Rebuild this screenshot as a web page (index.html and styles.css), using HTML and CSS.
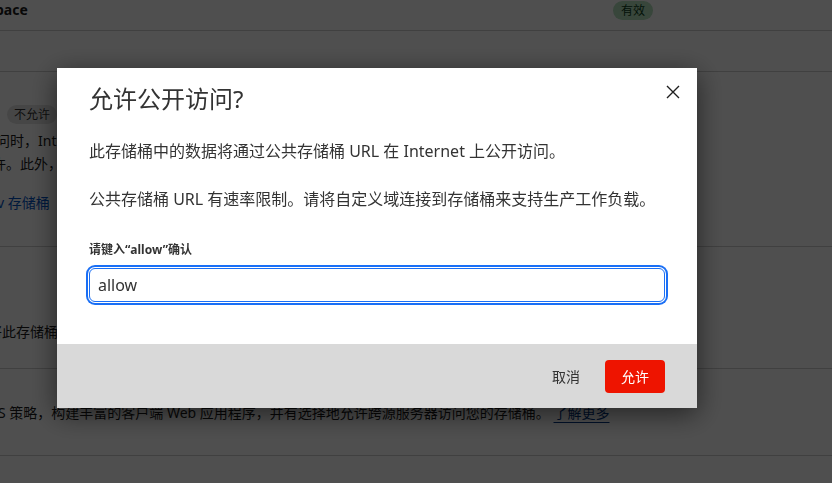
FILE: index.html
```html
<!DOCTYPE html>
<html lang="zh-CN">
<head>
    <meta charset="UTF-8">
    <meta name="viewport" content="width=device-width, initial-scale=1.0">
    <title>存储桶设置</title>
    <link rel="stylesheet" href="styles.css">
</head>
<body>

    <!-- Bucket settings page underneath the dialog -->
    <div class="page">
        <div class="row row-top">
            <span class="name">pace</span>
            <span class="badge badge-ok">有效</span>
        </div>
        <div class="row row-gap"></div>
        <div class="row section-access">
            <span class="badge badge-off">不允许</span>
            <p class="desc">问时，Internet 上的任何人都可以</p>
            <p class="desc">许。此外，您的存储桶</p>
            <a class="link">v 存储桶</a>
        </div>
        <div class="row section-domain">
            <p class="desc desc-cut">将此存储桶</p>
        </div>
        <div class="row section-cors">
            <p class="desc desc-cut2">S 策略，构建丰富的客户端 Web 应用程序，并有选择地允许跨源服务器访问您的存储桶。 <a class="link link-line">了解更多</a></p>
        </div>
    </div>

    <div class="overlay"></div>

    <div class="modal" role="dialog" aria-labelledby="modalTitle">
        <div class="modal-head">
            <h2 id="modalTitle">允许公开访问?</h2>
            <button class="close" aria-label="关闭">
                <svg width="14" height="14" viewBox="0 0 14 14">
                    <path d="M1 1 13 13M13 1 1 13" stroke="#1f1f1f" stroke-width="1.4" fill="none"/>
                </svg>
            </button>
        </div>
        <div class="modal-body">
            <div class="intro">
                <p>此存储桶中的数据将通过公共存储桶 URL 在 Internet 上公开访问。</p>
                <p>公共存储桶 URL 有速率限制。请将自定义域连接到存储桶来支持生产工作负载。</p>
            </div>
            <div class="field">
                <label for="confirmText">请键入“allow”确认</label>
                <input type="text" id="confirmText" value="allow" autofocus>
            </div>
        </div>
        <div class="modal-foot">
            <button class="btn btn-cancel">取消</button>
            <button class="btn btn-allow">允许</button>
        </div>
    </div>

</body>
</html>
```

FILE: styles.css
```css
* {
    box-sizing: border-box;
}

html, body {
    margin: 0;
    height: 100%;
}

body {
    font-family: "Noto Sans", "Noto Sans CJK SC", sans-serif;
    background-color: #fff;
    color: #1a1a1a;
    overflow: hidden;
}

/* page underneath */
.page {
    font-size: 14px;
}

.row {
    border-bottom: 1px solid #cecece;
}

.row-top {
    display: flex;
    align-items: flex-start;
    height: 31px;
    padding-top: 1px;
}

.name {
    width: 618px;
    margin-left: -5px;
    font-weight: 700;
    line-height: 17px;
}

.badge {
    display: inline-block;
    height: 19px;
    line-height: 19px;
    font-size: 12px;
    border-radius: 10px;
}

.badge-ok {
    padding: 0 8px;
    background-color: #b4e0bd;
    color: #0b3d1a;
}

.badge-off {
    margin-left: 7px;
    padding: 0 7px;
    background-color: #e3e3e3;
    color: #333;
}

.row-gap {
    height: 41px;
}

.section-access {
    height: 175px;
    padding-top: 32px;
}

.desc {
    margin: 0;
    line-height: 23px;
    white-space: nowrap;
}

.section-access .badge + .desc {
    margin-top: 5px;
    margin-left: -4px;
}

.section-access .desc + .desc {
    margin-left: -8px;
}

.link {
    display: block;
    margin-top: 16px;
    margin-left: -3px;
    line-height: 23px;
    color: #0051c3;
}

.section-domain {
    height: 122px;
    padding-top: 73px;
}

.desc-cut {
    margin-left: -12px;
}

.section-cors {
    height: 87px;
    padding-top: 32px;
}

.desc-cut2 {
    margin-left: -2px;
}

.link-line {
    display: inline;
    margin: 0;
    color: #003682;
    text-decoration: underline;
    text-underline-offset: 4px;
}

/* dialog */
.overlay {
    position: fixed;
    inset: 0;
    background-color: rgba(0, 0, 0, 0.69);
}

.modal {
    position: fixed;
    left: 57px;
    top: 68px;
    width: 640px;
    background-color: #fff;
    color: #333;
    box-shadow: 0 6px 26px rgba(0, 0, 0, 0.55);
}

.modal-head {
    position: relative;
    padding: 15px 32px 0;
}

.modal-head h2 {
    margin: 0;
    font-size: 24px;
    line-height: 32px;
    font-weight: 400;
    color: #333;
}

.close {
    position: absolute;
    top: 17px;
    right: 17px;
    width: 14px;
    height: 14px;
    padding: 0;
    border: none;
    background: none;
    cursor: pointer;
}

.close svg {
    display: block;
}

.modal-body {
    padding: 24px 32px 42px;
}

.intro p {
    margin: 0;
    font-size: 16px;
    line-height: 24px;
}

.intro p + p {
    margin-top: 24px;
}

.field {
    margin-top: 30px;
}

.field label {
    display: block;
    font-size: 12px;
    font-weight: 700;
    line-height: 18px;
}

.field input {
    display: block;
    width: 100%;
    height: 34px;
    margin-top: 9px;
    padding: 0 8px;
    font-family: inherit;
    font-size: 16px;
    color: #333;
    caret-color: #000;
    border: 1px solid #1a6ff5;
    border-radius: 6px;
    outline: none;
    box-shadow: 0 0 0 1px #fff, 0 0 0 3px #1a6ff5;
}

.modal-foot {
    display: flex;
    justify-content: flex-end;
    align-items: center;
    gap: 9px;
    height: 64px;
    padding: 0 32px;
    background-color: #d9d9d9;
}

.btn {
    height: 33px;
    padding: 0 16px;
    font-family: inherit;
    font-size: 14px;
    border: none;
    border-radius: 4px;
    cursor: pointer;
}

.btn-cancel {
    background: none;
    color: #333;
}

.btn-allow {
    background-color: #ee1400;
    color: #fff;
}
```
